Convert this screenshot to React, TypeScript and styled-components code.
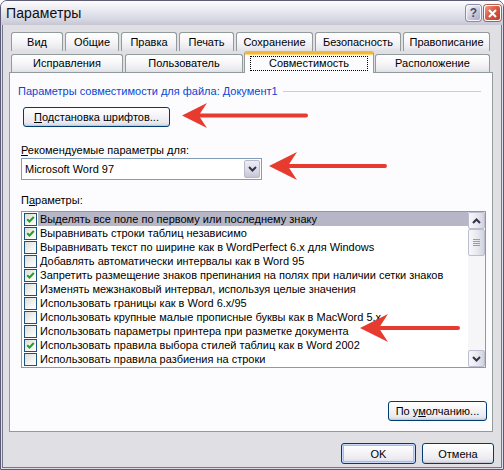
import React from "react"
import styled, { createGlobalStyle } from "styled-components"

const GlobalStyle = createGlobalStyle`
  html, body {
    margin: 0;
    padding: 0;
    background: #ffffff;
  }
  body {
    font-family: "Liberation Sans", Arial, sans-serif;
    font-size: 11px;
    color: #000000;
  }
  * {
    box-sizing: border-box;
  }
`

const Window = styled.div`
  position: relative;
  width: 504px;
  height: 470px;
  display: flex;
  flex-direction: column;
  border: 1px solid #5b5b76;
  border-radius: 7px 7px 0 0;
  background: #dcdce6;
  overflow: hidden;
`

const TitleBar = styled.div`
  flex: none;
  height: 24px;
  display: flex;
  align-items: center;
  gap: 3px;
  padding: 0 2px 0 5px;
  background: linear-gradient(#fdfdfe 0%, #ebebf2 35%, #d8d8e3 75%, #c6c6d4 100%);
`

const TitleText = styled.div`
  flex: 1;
  font-size: 14px;
  color: #0e0e14;
  letter-spacing: 0.1px;
`

const CaptionButton = styled.div<{ $close?: boolean }>`
  width: ${p => (p.$close ? 17 : 15)}px;
  height: 16px;
  display: flex;
  align-items: center;
  justify-content: center;
  border-radius: 3px;
  border: 1px solid ${p => (p.$close ? "#ffffff" : "#f4f4fa")};
  box-shadow: 0 0 0 1px ${p => (p.$close ? "#b55a4e" : "#8c8ca8")};
  background: ${p =>
    p.$close
      ? "linear-gradient(135deg, #f29c8c 0%, #dc5a44 45%, #c23a26 100%)"
      : "linear-gradient(135deg, #f4f4fa 0%, #cfcfe0 50%, #a9a9c4 100%)"};
  color: ${p => (p.$close ? "#ffffff" : "#4a4a66")};
  font-weight: bold;
  font-size: 12px;
`

const Body = styled.div`
  flex: 1;
  display: flex;
  flex-direction: column;
  margin: 0 1px 1px;
  border: 1px solid #75758e;
  border-top: none;
  background: #e0dfe3;
  padding: 7px 8px 0 6px;
`

const TabStrip = styled.div`
  margin-left: 2px;
  width: 479px;
  display: flex;
  flex-direction: column;
`

const TabRow = styled.div`
  display: flex;
  gap: 2px;
  align-items: flex-end;
`

const Tab = styled.div<{ $w: number; $h: number; $active?: boolean }>`
  position: relative;
  flex: none;
  width: ${p => p.$w}px;
  height: ${p => p.$h}px;
  display: flex;
  align-items: center;
  justify-content: center;
  border: 1px solid #919b9c;
  border-bottom: none;
  border-radius: 3px 3px 0 0;
  background: linear-gradient(#ffffff 0%, #f7f7f9 45%, #ebebf0 80%, #dfdfe6 100%);
  padding-bottom: 1px;
  white-space: nowrap;

  ${p =>
    p.$active &&
    `
    z-index: 2;
    width: ${p.$w + 2}px;
    height: ${p.$h + 4}px;
    margin: 0 -1px -1px;
    background: #fcfcfe;
    border-top: 3px solid #f6b63c;
    box-shadow: inset 0 1px 0 #ffd67a;
    padding: 2px 5px 3px;
  `}
`

const FocusRing = styled.span`
  flex: 1;
  height: 15px;
  display: flex;
  align-items: center;
  justify-content: center;
  border: 1px dotted #000000;
`

const Panel = styled.div`
  position: relative;
  z-index: 1;
  height: 360px;
  display: flex;
  flex-direction: column;
  align-items: flex-start;
  border: 1px solid #919b9c;
  background: #fcfcfe;
  padding: 11px 6px 0 8px;
`

const GroupHeader = styled.div`
  align-self: stretch;
  height: 13px;
  display: flex;
  align-items: center;
  color: #0b46d2;
  white-space: nowrap;
`

const GroupRule = styled.div`
  flex: 1;
  height: 1px;
  margin: 1px 5px 0 5px;
  background: #d0d0bf;
`

const PushButton = styled.button<{ $w: number; $h?: number; $default?: boolean }>`
  flex: none;
  width: ${p => p.$w}px;
  height: ${p => p.$h ?? 20}px;
  padding: 0;
  font: inherit;
  color: #000000;
  border: 1px solid #003c74;
  border-radius: 3px;
  background: linear-gradient(#ffffff 0%, #f6f6f9 40%, #e9e9ef 80%, #d4d4de 100%);
  box-shadow: ${p =>
    p.$default
      ? "inset 0 0 0 1px #c9d8f8, inset 0 0 0 2px #a6bcee"
      : "inset 0 -1px 0 #c8c8d4"};
`

const FontsButton = styled(PushButton)`
  margin: 10px 0 0 5px;
`

const DefaultsButton = styled(PushButton)`
  align-self: flex-end;
  margin: 33px -1px 0 0;
`

const FieldLabel = styled.div<{ $top: number }>`
  height: 13px;
  line-height: 13px;
  margin: ${p => p.$top}px 0 0 3px;
`

const Key = styled.span`
  text-decoration: underline;
`

const Combo = styled.div`
  width: 241px;
  height: 22px;
  margin: 1px 0 0 3px;
  display: flex;
  align-items: center;
  border: 1px solid #7f9db9;
  background: #ffffff;
  padding: 1px;
`

const ComboValue = styled.div`
  flex: 1;
  padding-left: 2px;
`

const ComboButton = styled.div`
  width: 16px;
  height: 18px;
  display: flex;
  align-items: center;
  justify-content: center;
  border: 1px solid #b9b9cc;
  border-radius: 2px;
  background: linear-gradient(#ededf4 0%, #d9d9e6 60%, #c4c4d6 100%);
`

const ListBox = styled.div`
  width: 465px;
  height: 157px;
  margin: 4px 0 0 3px;
  display: flex;
  border: 1px solid #7f9db9;
  background: #ffffff;
`

const Rows = styled.div`
  flex: 1;
  display: flex;
  flex-direction: column;
  padding-left: 2px;
`

const Row = styled.div`
  height: 14px;
  display: flex;
  align-items: center;
`

const Box = styled.span`
  flex: none;
  width: 13px;
  height: 13px;
  margin-right: 1px;
  display: flex;
  align-items: center;
  justify-content: center;
  border: 1px solid #1c5180;
  background: linear-gradient(135deg, #dcdcd7 0%, #f4f4f0 60%, #ffffff 100%);
`

const RowLabel = styled.span<{ $selected?: boolean }>`
  flex: 1;
  height: 14px;
  line-height: 14px;
  padding-left: 2px;
  white-space: nowrap;
  overflow: hidden;
  background: ${p => (p.$selected ? "#b6b6c6" : "transparent")};
`

const ScrollBar = styled.div`
  flex: none;
  width: 17px;
  display: flex;
  flex-direction: column;
  background: #f6f6f9;
`

const ScrollButton = styled.div<{ $h: number }>`
  height: ${p => p.$h}px;
  display: flex;
  align-items: center;
  justify-content: center;
  border: 1px solid #bdbdcf;
  border-radius: 2px;
  background: linear-gradient(90deg, #f8f8fb 0%, #e6e6ee 60%, #d2d2de 100%);
`

const ScrollTrack = styled.div`
  flex: 1;
`

const Footer = styled.div`
  display: flex;
  justify-content: flex-end;
  gap: 6px;
  margin: 11px -1px 0 0;
`

const ArrowMark = styled.svg<{ $x: number; $y: number }>`
  position: absolute;
  left: ${p => p.$x}px;
  top: ${p => p.$y}px;
  z-index: 5;
  pointer-events: none;
`

const topTabs = [
  { label: "Вид", w: 52 },
  { label: "Общие", w: 54 },
  { label: "Правка", w: 56 },
  { label: "Печать", w: 55 },
  { label: "Сохранение", w: 77 },
  { label: "Безопасность", w: 86 },
  { label: "Правописание", w: 87 },
]

const bottomTabs = [
  { label: "Исправления", w: 112 },
  { label: "Пользователь", w: 118 },
  { label: "Совместимость", w: 128, active: true },
  { label: "Расположение", w: 115 },
]

const options = [
  { text: "Выделять все поле по первому или последнему знаку", on: true },
  { text: "Выравнивать строки таблиц независимо", on: true },
  { text: "Выравнивать текст по ширине как в WordPerfect 6.x для Windows", on: false },
  { text: "Добавлять автоматически интервалы как в Word 95", on: false },
  { text: "Запретить размещение знаков препинания на полях при наличии сетки знаков", on: true },
  { text: "Изменять межзнаковый интервал, используя целые значения", on: false },
  { text: "Использовать границы как в Word 6.x/95", on: false },
  { text: "Использовать крупные малые прописные буквы как в MacWord 5.x", on: false },
  { text: "Использовать параметры принтера при разметке документа", on: false },
  { text: "Использовать правила выбора стилей таблиц как в Word 2002", on: true },
  { text: "Использовать правила разбиения на строки", on: false },
]

// red pointer: tip at (x, y), tail runs to the right
const Arrow = ({ x, y, length, head }: { x: number; y: number; length: number; head: number }) => {
  const c = head / 2
  const hl = head
  return (
    <ArrowMark $x={x - 1} $y={y - c - 1} width={length} height={head} viewBox={`0 0 ${length} ${head}`}>
      <path
        d={`M0 ${c} L${hl} 0 L${hl * 0.72} ${c - 2} L${length - 2} ${c - 2} A2 2 0 0 1 ${length - 2} ${c + 2} L${hl * 0.72} ${c + 2} L${hl} ${head} Z`}
        fill="#e63b2e"
      />
    </ArrowMark>
  )
}

const Check = () => (
  <svg width="9" height="9" viewBox="0 0 9 9">
    <path d="M1.2 4.2 L3.5 6.5 L7.8 2" stroke="#21a121" strokeWidth="2" fill="none" />
  </svg>
)

const Chevron = ({ up }: { up?: boolean }) => (
  <svg width="9" height="6" viewBox="0 0 9 6">
    <path
      d={up ? "M1 5 L4.5 1.5 L8 5" : "M1 1 L4.5 4.5 L8 1"}
      stroke="#33334a"
      strokeWidth="2"
      fill="none"
    />
  </svg>
)

const Grip = () => (
  <svg width="7" height="8" viewBox="0 0 7 8">
    {[0.5, 2.5, 4.5, 6.5].map(y => (
      <line key={y} x1="0" x2="7" y1={y} y2={y} stroke="#9a9ab2" strokeWidth="1" />
    ))}
  </svg>
)

const App: React.FC = () => {
  return (
    <>
      <GlobalStyle />
      <Window>
        <TitleBar>
          <TitleText>Параметры</TitleText>
          <CaptionButton>?</CaptionButton>
          <CaptionButton $close>
            <svg width="9" height="9" viewBox="0 0 9 9">
              <path d="M1 1 L8 8 M8 1 L1 8" stroke="#ffffff" strokeWidth="2" />
            </svg>
          </CaptionButton>
        </TitleBar>

        <Body>
          <TabStrip>
            <TabRow>
              {topTabs.map(t => (
                <Tab key={t.label} $w={t.w} $h={19}>
                  {t.label}
                </Tab>
              ))}
            </TabRow>
            <TabRow>
              {bottomTabs.map(t => (
                <Tab key={t.label} $w={t.w} $h={18} $active={t.active}>
                  {t.active ? <FocusRing>{t.label}</FocusRing> : t.label}
                </Tab>
              ))}
            </TabRow>
          </TabStrip>

          <Panel>
            <GroupHeader>
              Параметры совместимости для файла: Документ1
              <GroupRule />
            </GroupHeader>

            <FontsButton $w={147}>
              <Key>П</Key>одстановка шрифтов...
            </FontsButton>

            <FieldLabel $top={17}>
              <Key>Р</Key>екомендуемые параметры для:
            </FieldLabel>
            <Combo>
              <ComboValue>Microsoft Word 97</ComboValue>
              <ComboButton>
                <Chevron />
              </ComboButton>
            </Combo>

            <FieldLabel $top={14}>
              П<Key>а</Key>раметры:
            </FieldLabel>
            <ListBox>
              <Rows>
                {options.map((o, i) => (
                  <Row key={o.text}>
                    <Box>{o.on && <Check />}</Box>
                    <RowLabel $selected={i === 0}>{o.text}</RowLabel>
                  </Row>
                ))}
              </Rows>
              <ScrollBar>
                <ScrollButton $h={17}>
                  <Chevron up />
                </ScrollButton>
                <ScrollButton $h={27}>
                  <Grip />
                </ScrollButton>
                <ScrollTrack />
                <ScrollButton $h={17}>
                  <Chevron />
                </ScrollButton>
              </ScrollBar>
            </ListBox>

            <DefaultsButton $w={99}>
              По у<Key>м</Key>олчанию...
            </DefaultsButton>
          </Panel>

          <Footer>
            <PushButton $w={75} $h={21} $default>
              OK
            </PushButton>
            <PushButton $w={72} $h={21}>
              Отмена
            </PushButton>
          </Footer>
        </Body>

        <Arrow x={182} y={115} length={126} head={25} />
        <Arrow x={269} y={166} length={118} head={28} />
        <Arrow x={360} y={328} length={100} head={28} />
      </Window>
    </>
  )
}

export default App
